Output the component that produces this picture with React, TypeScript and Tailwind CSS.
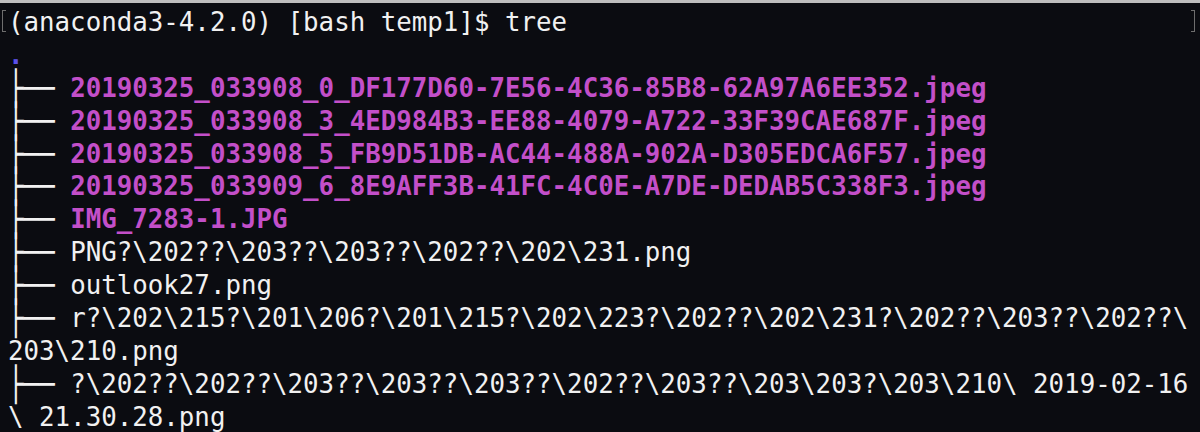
import { FC, ReactNode } from 'react';

const files = [
  '20190325_033908_0_DF177D60-7E56-4C36-85B8-62A97A6EE352.jpeg',
  '20190325_033908_3_4ED984B3-EE88-4079-A722-33F39CAE687F.jpeg',
  '20190325_033908_5_FB9D51DB-AC44-488A-902A-D305EDCA6F57.jpeg',
  '20190325_033909_6_8E9AFF3B-41FC-4C0E-A7DE-DEDAB5C338F3.jpeg',
  'IMG_7283-1.JPG',
];

const Line: FC<{ children: ReactNode }> = ({ children }) => (
  <div className="h-[32.9px]">{children}</div>
);

const Branch: FC<{ children: ReactNode }> = ({ children }) => (
  <Line>
    <span className="inline-block scale-y-[1.3]">├──</span>{' '}
    {children}
  </Line>
);

const App: FC = () => {
  return (
    <div className="relative w-[1200px] h-[432px] overflow-hidden bg-[#0b0c11]">
      <div className="h-[3px] bg-[#bebebe]" />
      <div className="absolute left-[2px] top-[10px] w-[4px] h-[22px] border border-r-0 border-[#6e6e6e]" />
      <div className="absolute left-[1191px] top-[10px] w-[4px] h-[22px] border border-l-0 border-[#6e6e6e]" />
      <div className="pl-2 pt-[3px] whitespace-pre font-['DejaVu_Sans_Mono',monospace] text-[25.8px] leading-[32.9px] text-[#f1f1f1]">
        <Line>(anaconda3-4.2.0) [bash temp1]$ tree</Line>
        <Line>
          <span className="font-bold text-[#5b50ea]">.</span>
        </Line>
        {files.map((f) => (
          <Branch key={f}>
            <span className="font-bold text-[#c34fc9]">{f}</span>
          </Branch>
        ))}
        <Branch>PNG?\202??\203??\203??\202??\202\231.png</Branch>
        <Branch>outlook27.png</Branch>
        <Branch>r?\202\215?\201\206?\201\215?\202\223?\202??\202\231?\202??\203??\202??\</Branch>
        <Line>203\210.png</Line>
        <Branch>?\202??\202??\203??\203??\203??\202??\203??\203\203?\203\210\ 2019-02-16</Branch>
        <Line>\ 21.30.28.png</Line>
      </div>
    </div>
  );
};

export default App;
